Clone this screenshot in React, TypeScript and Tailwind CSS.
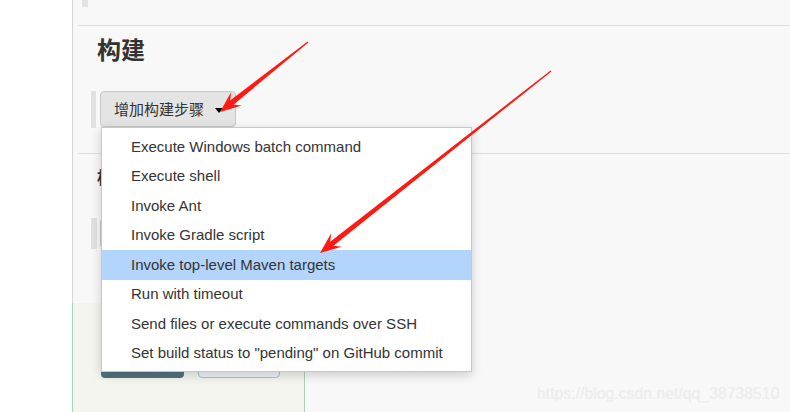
import React from "react";

const items = [
  "Execute Windows batch command",
  "Execute shell",
  "Invoke Ant",
  "Invoke Gradle script",
  "Invoke top-level Maven targets",
  "Run with timeout",
  "Send files or execute commands over SSH",
  'Set build status to "pending" on GitHub commit',
];

// tapered red arrow, screenshot-tool style
function arrowPoints(tx: number, ty: number, px: number, py: number) {
  const dx = px - tx;
  const dy = py - ty;
  const len = Math.hypot(dx, dy);
  const ux = dx / len;
  const uy = dy / len;
  const nx = -uy;
  const ny = ux;
  const hl = 21;
  const hw = 8.5;
  const neck = 15;
  const sw = 2.6;
  const p = (a: number, w: number) =>
    `${(px - ux * a + nx * w).toFixed(1)},${(py - uy * a + ny * w).toFixed(1)}`;
  return [
    `${(tx + nx * 0.6).toFixed(1)},${(ty + ny * 0.6).toFixed(1)}`,
    p(neck, sw),
    p(hl, hw),
    `${px},${py}`,
    p(hl, -hw),
    p(neck, -sw),
    `${(tx - nx * 0.6).toFixed(1)},${(ty - ny * 0.6).toFixed(1)}`,
  ].join(" ");
}

export default function App() {
  return (
    <div
      className="relative w-[790px] h-[412px] overflow-hidden flex bg-white text-[#333]"
      style={{ fontFamily: '"Liberation Sans", Arial, "Noto Sans CJK SC", sans-serif' }}
    >
      {/* left column */}
      <aside className="w-[72px] shrink-0 bg-white" />

      {/* main */}
      <main className="flex-1 h-full border-l border-[#d6d6d6] bg-[#f8f8f8] flex flex-col">
        <div className="ml-[5px] h-[26px] border-b border-[#dfdfdf]">
          <div className="ml-[4px] w-[6px] h-[7px] bg-[#e2e2e2]" />
        </div>

        <h2
          className="ml-[24px] mt-[8px] h-[30px] leading-[30px] text-[24px] font-bold text-[#333]"
          style={{ fontFamily: '"Noto Sans CJK SC", sans-serif' }}
        >
          构建
        </h2>

        <div className="ml-[18px] mt-[27px] flex">
          <div className="w-[5px] h-[37px] bg-[#e1e1e1]" />
          <button className="ml-[4px] w-[136px] h-[36px] rounded-[4px] border border-[#c9c9c9] bg-[#e4e4e4] flex items-center pl-[13px]">
            <span
              className="text-[15px] text-[#333]"
              style={{ fontFamily: '"Noto Sans CJK SC", sans-serif' }}
            >
              增加构建步骤
            </span>
            <span className="ml-[11px] mt-[2px] w-0 h-0 border-l-[4px] border-r-[4px] border-t-[5px] border-l-transparent border-r-transparent border-t-black" />
          </button>
        </div>

        <div className="ml-[5px] mt-[25px] border-t border-[#dfdfdf]" />

        {/* mostly hidden behind the open menu */}
        <h2
          className="ml-[24px] mt-[12px] text-[17px] leading-[22px] font-bold text-[#333]"
          style={{ fontFamily: '"Noto Sans CJK SC", sans-serif' }}
        >
          构建后操作
        </h2>

        <div className="ml-[18px] mt-[30px] flex">
          <div className="w-[6px] h-[31px] bg-[#e1e1e1]" />
          <div className="ml-[3px] w-[160px] h-[31px] rounded-[4px] border border-[#c9c9c9] bg-[#e4e4e4]" />
        </div>

        {/* save / apply panel */}
        <div className="-ml-px mt-auto w-[233px] h-[109px] border-x border-[#a9d4b8] bg-[#f4f5ee] pl-[28px] pt-[43px] flex gap-[14px]">
          <div className="w-[83px] h-[32px] rounded-[4px] bg-gradient-to-b from-[#6d8d9c] to-[#4f6f7e]" />
          <div className="w-[82px] h-[32px] rounded-[4px] border border-[#a9bfd9] bg-[#f0f3f7]" />
        </div>
      </main>

      {/* dropdown menu */}
      <ul className="absolute left-[101px] top-[127px] w-[371px] h-[245px] bg-white border border-[#c8c8c8] shadow-[0_3px_10px_rgba(0,0,0,0.18)] pt-[4px] pb-[5px]">
        {items.map((t, i) => (
          <li
            key={t}
            className={
              i === 4
                ? "h-[29.5px] flex items-center pl-[29px] text-[15px] text-[#333] bg-[#b3d4fc]"
                : "h-[29.5px] flex items-center pl-[29px] text-[15px] text-[#333]"
            }
          >
            {t}
          </li>
        ))}
      </ul>

      {/* annotation arrows */}
      <svg
        className="absolute inset-0 pointer-events-none"
        width="790"
        height="412"
        viewBox="0 0 790 412"
      >
        <polygon points={arrowPoints(308, 42, 220, 112)} fill="#fe1a12" />
        <polygon points={arrowPoints(551, 71, 320, 253)} fill="#fe1a12" />
      </svg>

      {/* watermark */}
      <div
        className="absolute left-[537px] top-[382px] text-[15.8px] text-[#eeeeee]"
        style={{ textShadow: "0 0 1px rgba(0,0,0,0.06)" }}
      >
        https://blog.csdn.net/qq_38738510
      </div>
    </div>
  );
}
